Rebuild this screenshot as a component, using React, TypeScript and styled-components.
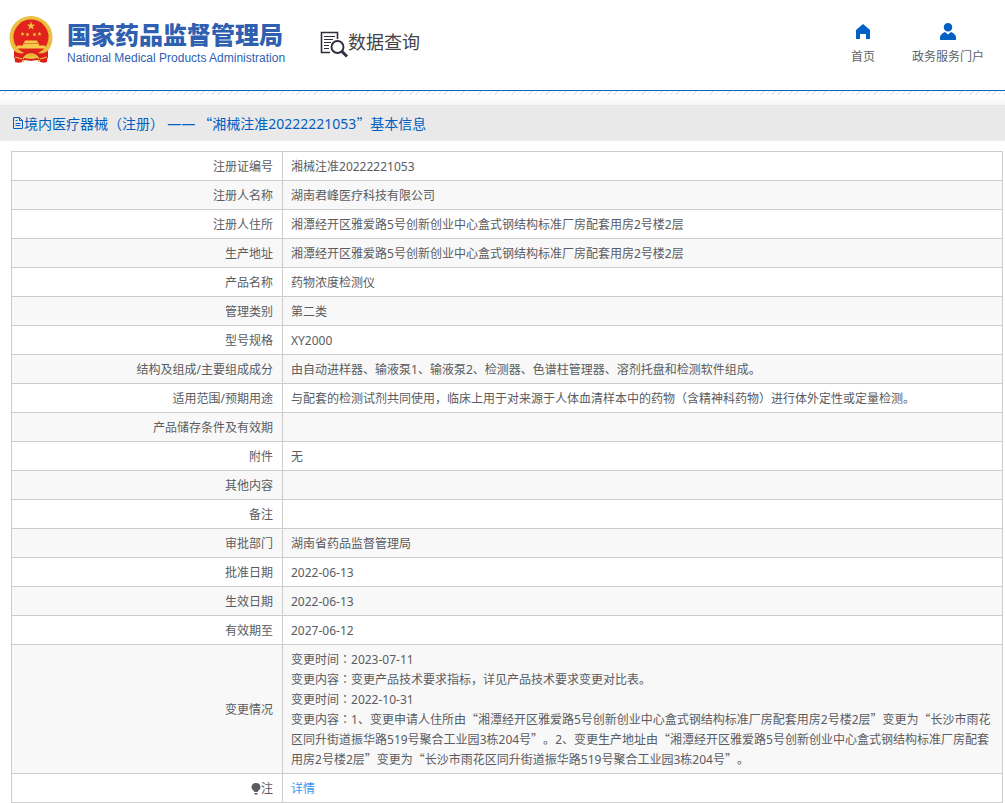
import React from 'react';
import styled, { createGlobalStyle } from 'styled-components';

const CJK = '"Noto Sans CJK SC", sans-serif';

const GlobalStyle = createGlobalStyle`
  * { box-sizing: border-box; }
  body {
    margin: 0;
    background: #fff;
    color: #5a5c61;
    font: 12px/20px ${CJK};
    text-spacing-trim: space-all;
  }
`;

const Header = styled.header`
  display: flex;
  align-items: flex-start;
  height: 91px;
  padding: 15px 21px 0 9px;
  border-bottom: 1px solid #0a68c0;
`;

const Brand = styled.a`
  display: flex;
  gap: 14px;
  color: #2f5fb0;
  text-decoration: none;
`;

const BrandText = styled.div`
  display: flex;
  flex-direction: column;
  padding-top: 4px;
`;

const BrandName = styled.strong`
  font-size: 24px;
  line-height: 30px;
  font-weight: 900;
  white-space: nowrap;
`;

const BrandEnglish = styled.span`
  font: 12px/18px "Liberation Sans", Arial, sans-serif;
  white-space: nowrap;
`;

const Section = styled.div`
  display: flex;
  align-items: center;
  margin: 9px 0 0 35px;
  color: #45444a;
  font-size: 18px;
  line-height: 24px;
  white-space: nowrap;
  svg { margin-top: 6px; }
`;

const Nav = styled.nav`
  display: flex;
  gap: 37px;
  margin: 8px 0 0 auto;
`;

const NavLink = styled.a`
  display: flex;
  flex-direction: column;
  align-items: center;
  gap: 5px;
  color: #606266;
  text-decoration: none;
  white-space: nowrap;
  svg { color: #0060c4; }
`;

const Stripes = styled.div`
  height: 14px;
  background:
    repeating-linear-gradient(135deg, #e6e6e6 0 1px, #fff 1px 4px) 0 0 / 100% 4px no-repeat,
    linear-gradient(#fff 40%, #f5f5f5);
`;

const TitleBar = styled.h1`
  display: flex;
  align-items: center;
  height: 36px;
  margin: 0 0 10px;
  padding: 0 12px;
  background: #e9e9e9;
  border-bottom: 1px solid #f0f0f4;
  color: #0060c0;
  font-size: 14px;
  font-weight: 400;
`;

const TableWrap = styled.main`
  padding: 0 2px 0 11px;
`;

const Table = styled.table`
  width: 100%;
  table-layout: fixed;
  border-collapse: collapse;
  border: 1px solid #cdcdcd;
`;

const Row = styled.tr`
  &:nth-child(even) { background: #f8f8f8; }
`;

const Label = styled.th`
  width: 271px;
  height: 29px;
  padding: 4px 9px;
  border: 1px solid #cdcdcd;
  font-weight: 400;
  text-align: right;
`;

const Value = styled.td`
  padding: 4px 8px;
  border: 1px solid #cdcdcd;
`;

const Line = styled.div``;

const Latin = styled.span`
  font-family: "Noto Sans", sans-serif;
  line-height: 12px;
`;

const Colon = styled.span`
  font-family: "Noto Sans CJK JP", sans-serif;
  line-height: 12px;
`;

const DetailLink = styled.a`
  color: #3a94f0;
  text-decoration: none;
`;

const BulbIcon = styled.svg`
  vertical-align: -2px;
`;

/* Latin letters, digits and dashes use the Latin face, full-width colons the centred one. */
function Mixed({ text }: { text: string }) {
  return (
    <>
      {text.split(/([A-Za-z0-9/—-]+|：)/).map((part, i) => {
        if (i % 2 === 0) return part;
        return part === '：' ? <Colon key={i}>{part}</Colon> : <Latin key={i}>{part}</Latin>;
      })}
    </>
  );
}

const star = (cx: number, cy: number, r: number) =>
  Array.from({ length: 10 }, (_, i) => {
    const radius = i % 2 ? r * 0.4 : r;
    const a = (Math.PI / 5) * i - Math.PI / 2;
    return `${(cx + radius * Math.cos(a)).toFixed(2)},${(cy + radius * Math.sin(a)).toFixed(2)}`;
  }).join(' ');

function Emblem() {
  return (
    <svg width="44" height="49" viewBox="0 0 44 49" aria-hidden="true">
      <path d="M5 34 L6 47 Q12 49 16 45 L22 46 L28 45 Q33 49 38 47 L39 34Z" fill="#d9201d" />
      <circle cx="22" cy="22.5" r="21.5" fill="#e9b93a" />
      <circle cx="22" cy="22.5" r="20" fill="none" stroke="#f0ca50" strokeWidth="1.5" strokeDasharray="2 1.5" />
      <circle cx="22" cy="22" r="17.5" fill="#e2231d" />
      <polygon points={star(22, 11, 4.4)} fill="#f3c544" />
      <polygon points={star(13.5, 19, 2.2)} fill="#f3c544" />
      <polygon points={star(18.5, 19.5, 2.2)} fill="#f3c544" />
      <polygon points={star(25.5, 19.5, 2.2)} fill="#f3c544" />
      <polygon points={star(30.5, 19, 2.2)} fill="#f3c544" />
      <path d="M15 28 L16 25.5 H28 L29 28Z M14 28.5H30V30.5H36L37 33.5H7L8 30.5H14Z" fill="#f3cb48" />
      <path d="M5 36 Q14 41 18 36 Q22 33 26 36 Q30 41 39 36 L39 43 Q31 45 27 41 Q22 38 17 41 Q13 45 5 43Z" fill="#d9201d" />
      <path d="M14 44 Q17 39 22 39 Q27 39 30 44 M6 42 L13 44 M38 42 L31 44" fill="none" stroke="#f0c040" strokeWidth="1.3" />
      <path d="M13 46h2M29 46h2" stroke="#f0c040" strokeWidth="2" />
    </svg>
  );
}

function QueryIcon() {
  return (
    <svg width="28" height="28" viewBox="0 0 28 28" fill="none" stroke="#302e3e" aria-hidden="true">
      <path d="M17.5 9V2.5H1.5v20H10" strokeWidth="1.6" />
      <path d="M4 6.5h11M4 9.5h9M4 12.5h7M4 15.5h5M4 18.5h5" strokeWidth="1.1" />
      <circle cx="17.5" cy="17" r="6" strokeWidth="1.9" />
      <path d="M22 21.5l5 5" strokeWidth="3" />
    </svg>
  );
}

function HomeIcon() {
  return (
    <svg width="18" height="18" viewBox="0 0 18 18" fill="currentColor" aria-hidden="true">
      <path d="M9 1L16 7V16H12V11H6V16H2V7Z" />
    </svg>
  );
}

function UserIcon() {
  return (
    <svg width="18" height="18" viewBox="0 0 18 18" fill="currentColor" aria-hidden="true">
      <path d="M9 0c2.6 0 4.2 1.8 4.2 4.3S11.6 8.6 9 8.6 4.8 6.8 4.8 4.3 6.4 0 9 0Z" />
      <path d="M6 9L9 11.5 12 9Q16.5 11 17 14V17H1V14Q1.5 11 6 9Z" />
    </svg>
  );
}

function FileIcon() {
  return (
    <svg width="12" height="14" viewBox="0 0 12 14" fill="none" stroke="currentColor" aria-hidden="true">
      <path d="M1.5 1.5H7.5L10.5 4.5V12.5H1.5ZM7.5 1.5V4.5H10.5M3.5 4.5H5.5M3.5 7.5H8.5M3.5 9.5H8.5" />
    </svg>
  );
}

const rows: [string, string[]][] = [
  ['注册证编号', ['湘械注准20222221053']],
  ['注册人名称', ['湖南君峰医疗科技有限公司']],
  ['注册人住所', ['湘潭经开区雅爱路5号创新创业中心盒式钢结构标准厂房配套用房2号楼2层']],
  ['生产地址', ['湘潭经开区雅爱路5号创新创业中心盒式钢结构标准厂房配套用房2号楼2层']],
  ['产品名称', ['药物浓度检测仪']],
  ['管理类别', ['第二类']],
  ['型号规格', ['XY2000']],
  ['结构及组成/主要组成成分', ['由自动进样器、输液泵1、输液泵2、检测器、色谱柱管理器、溶剂托盘和检测软件组成。']],
  ['适用范围/预期用途', ['与配套的检测试剂共同使用，临床上用于对来源于人体血清样本中的药物（含精神科药物）进行体外定性或定量检测。']],
  ['产品储存条件及有效期', []],
  ['附件', ['无']],
  ['其他内容', []],
  ['备注', []],
  ['审批部门', ['湖南省药品监督管理局']],
  ['批准日期', ['2022-06-13']],
  ['生效日期', ['2022-06-13']],
  ['有效期至', ['2027-06-12']],
  ['变更情况', [
    '变更时间：2023-07-11',
    '变更内容：变更产品技术要求指标，详见产品技术要求变更对比表。',
    '变更时间：2022-10-31',
    '变更内容：1、变更申请人住所由“湘潭经开区雅爱路5号创新创业中心盒式钢结构标准厂房配套用房2号楼2层”变更为“长沙市雨花区同升街道振华路519号聚合工业园3栋204号”。2、变更生产地址由“湘潭经开区雅爱路5号创新创业中心盒式钢结构标准厂房配套用房2号楼2层”变更为“长沙市雨花区同升街道振华路519号聚合工业园3栋204号”。',
  ]],
];

export default function App() {
  return (
    <>
      <GlobalStyle />
      <Header>
        <Brand href="#">
          <Emblem />
          <BrandText>
            <BrandName>国家药品监督管理局</BrandName>
            <BrandEnglish>National Medical Products Administration</BrandEnglish>
          </BrandText>
        </Brand>
        <Section><QueryIcon />数据查询</Section>
        <Nav>
          <NavLink href="#"><HomeIcon />首页</NavLink>
          <NavLink href="#"><UserIcon />政务服务门户</NavLink>
        </Nav>
      </Header>
      <Stripes />
      <TitleBar>
        <FileIcon />
        <span><Mixed text="境内医疗器械（注册） —— “湘械注准20222221053”基本信息" /></span>
      </TitleBar>
      <TableWrap>
        <Table>
          <tbody>
            {rows.map(([label, lines]) => (
              <Row key={label}>
                <Label scope="row"><Mixed text={label} /></Label>
                <Value>{lines.map((line, i) => <Line key={i}><Mixed text={line} /></Line>)}</Value>
              </Row>
            ))}
            <Row>
              <Label scope="row">
                <BulbIcon width="10" height="12" viewBox="0 0 10 12" fill="currentColor" aria-hidden="true">
                  <path d="M5 0C8 0 9.5 2 9.5 4.2 9.5 6.5 7 7.5 6.5 9H3.5C3 7.5 .5 6.5 .5 4.2 .5 2 2 0 5 0ZM3.5 10H6.5V11.5H3.5Z" />
                </BulbIcon>
                注
              </Label>
              <Value><DetailLink href="#">详情</DetailLink></Value>
            </Row>
          </tbody>
        </Table>
      </TableWrap>
    </>
  );
}
